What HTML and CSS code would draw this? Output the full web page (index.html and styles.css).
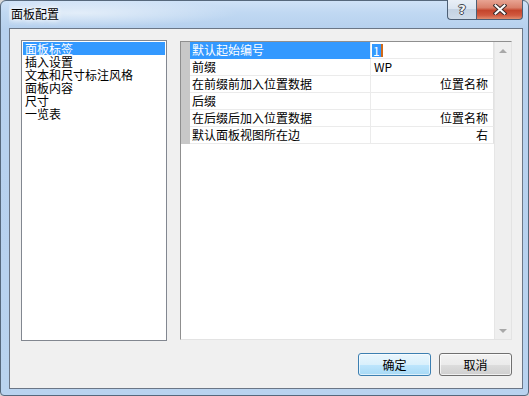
FILE: index.html
```html
<!DOCTYPE html>
<html>
<head>
<meta charset="utf-8">
<link rel="stylesheet" href="styles.css">
</head>
<body>
<div class="window">
  <div class="titlebar">
    <span class="title">面板配置</span>
    <div class="caption-btns">
      <div class="cap-btn help"><span class="qmark">?</span></div>
      <div class="cap-btn close">
        <svg width="14" height="11" viewBox="0 0 14 11">
          <path d="M2.5 1.5 L11.5 9.5 M11.5 1.5 L2.5 9.5" stroke="#3b2c2c" stroke-width="4" stroke-linecap="square"/>
          <path d="M2.5 1.5 L11.5 9.5 M11.5 1.5 L2.5 9.5" stroke="#ffffff" stroke-width="2" stroke-linecap="square"/>
        </svg>
      </div>
    </div>
  </div>
  <div class="client">
    <div class="panes">
      <ul class="list">
        <li class="item selected">面板标签</li>
        <li class="item">插入设置</li>
        <li class="item">文本和尺寸标注风格</li>
        <li class="item">面板内容</li>
        <li class="item">尺寸</li>
        <li class="item">一览表</li>
      </ul>
      <div class="grid">
        <div class="table">
          <div class="row">
            <div class="rh"></div>
            <div class="name sel">默认起始编号</div>
            <div class="val"><span class="edit-sel">1</span><span class="caret"></span></div>
          </div>
          <div class="row">
            <div class="rh"></div>
            <div class="name">前缀</div>
            <div class="val">WP</div>
          </div>
          <div class="row">
            <div class="rh"></div>
            <div class="name">在前缀前加入位置数据</div>
            <div class="val right">位置名称</div>
          </div>
          <div class="row">
            <div class="rh"></div>
            <div class="name">后缀</div>
            <div class="val"></div>
          </div>
          <div class="row">
            <div class="rh"></div>
            <div class="name">在后缀后加入位置数据</div>
            <div class="val right">位置名称</div>
          </div>
          <div class="row">
            <div class="rh"></div>
            <div class="name">默认面板视图所在边</div>
            <div class="val right">右</div>
          </div>
        </div>
        <div class="scrollbar">
          <span class="arrow up"></span>
          <span class="arrow down"></span>
        </div>
      </div>
    </div>
    <div class="buttons">
      <button class="btn default">确定</button>
      <button class="btn">取消</button>
    </div>
  </div>
</div>
</body>
</html>
```
FILE: styles.css
```css
* { box-sizing: border-box; }
html, body { margin: 0; padding: 0; background: #d8d8d8; }
body { width: 529px; height: 396px; overflow: hidden; font-family: "Noto Sans CJK SC", "Liberation Sans", sans-serif; font-size: 12px; }

.window {
  width: 529px;
  height: 396px;
  display: flex;
  flex-direction: column;
  background: linear-gradient(to bottom, #cfe2f7 0px, #c0d8f2 12px, #b6d0ee 28px, #b9d3ef 100%);
  border: 1px solid #56687c;
  border-radius: 6px 6px 4px 4px;
  padding: 0 5px 6px 8px;
}

.titlebar {
  height: 27px;
  display: flex;
  align-items: flex-start;
  background: radial-gradient(ellipse 160px 14px at 70px 12px, rgba(255,255,255,0.55), rgba(255,255,255,0) 100%);
}
.title {
  margin-top: 6px;
  margin-left: 2px;
  line-height: 14px;
  font-size: 12px;
  color: #000;
  text-shadow: 0 0 4px #fff, 0 0 6px #fff;
}
.caption-btns {
  margin-left: auto;
  display: flex;
  margin-top: -1px;
}
.cap-btn {
  height: 20px;
  border: 1px solid #4d5f75;
  border-top: none;
  display: flex;
  align-items: center;
  justify-content: center;
}
.help {
  width: 29px;
  border-right: none;
  border-radius: 0 0 0 4px;
  background: linear-gradient(to bottom, #e9eff7 0%, #dbe5f1 45%, #c4d2e3 50%, #cfdbe9 100%);
}
.qmark {
  font-family: "DejaVu Sans", sans-serif;
  font-weight: bold;
  font-size: 13px;
  line-height: 14px;
  color: #f4f4f4;
  text-shadow: -1px 0 #3d4550, 1px 0 #3d4550, 0 -1px #3d4550, 0 1px #3d4550;
}
.close {
  width: 47px;
  border-radius: 0 0 4px 0;
  background: linear-gradient(to bottom, #e8a493 0%, #d9806b 40%, #c4452c 55%, #d0583e 80%, #e08c6e 100%);
}

.client {
  flex: 1;
  background: #f0f0f0;
  border: 1px solid #6b7686;
  display: flex;
  flex-direction: column;
  padding: 11px 10px 12px 11px;
}

.panes {
  display: flex;
  align-items: flex-start;
  gap: 13px;
}

.list {
  list-style: none;
  margin: 0;
  width: 147px;
  height: 301px;
  padding: 1px;
  background: #fff;
  border: 1px solid #828790;
}
.item {
  height: 13px;
  line-height: 13px;
  padding-left: 2px;
  white-space: nowrap;
  color: #000;
}
.item.selected { background: #3399ff; color: #fff; }

.grid {
  margin-top: 1px;
  width: 332px;
  height: 299px;
  background: #fff;
  border-top: 1px solid #8f8f8f;
  border-left: 1px solid #8f8f8f;
  border-right: 1px solid #e3e3e3;
  border-bottom: 1px solid #e3e3e3;
  display: flex;
}
.table {
  flex: 1;
  display: flex;
  flex-direction: column;
}
.row {
  display: flex;
  height: 17px;
}
.rh {
  width: 9px;
  background: #c8c8c8;
}
.name, .val {
  height: 17px;
  line-height: 16px;
  border-bottom: 1px solid #ebebeb;
  white-space: nowrap;
}
.name {
  width: 181px;
  padding-left: 2px;
  border-right: 1px solid #ebebeb;
  color: #000;
}
.name.sel { background: #3399ff; color: #fff; border-bottom-color: #3399ff; }
.val {
  width: 123px;
  padding: 0 5px 0 3px;
  border-right: 1px solid #e2e2e2;
  color: #000;
  display: flex;
  align-items: center;
}
.val.right { justify-content: flex-end; }
.edit-sel {
  margin-left: -2px;
  background: #3399ff;
  color: #fff;
  line-height: 13px;
  padding: 0 1px;
}
.caret {
  width: 2px;
  height: 13px;
  background: #d06a1a;
  margin-left: 0;
}

.scrollbar {
  width: 17px;
  background: #efefef;
  border-left: 1px solid #e6e6e6;
  display: flex;
  flex-direction: column;
  justify-content: space-between;
  align-items: center;
  padding: 7px 0 6px;
}
.arrow {
  width: 0;
  height: 0;
  border-left: 4px solid transparent;
  border-right: 4px solid transparent;
}
.arrow.up { border-bottom: 4px solid #a8a8a8; }
.arrow.down { border-top: 4px solid #a8a8a8; }

.buttons {
  margin-top: 12px;
  display: flex;
  justify-content: flex-end;
  gap: 8px;
}
.btn {
  width: 73px;
  height: 23px;
  padding: 0;
  font-family: "Noto Sans CJK SC", "Liberation Sans", sans-serif;
  font-size: 12px;
  color: #000;
  border: 1px solid #707070;
  border-radius: 3px;
  background: linear-gradient(to bottom, #f2f2f2 0%, #ebebeb 50%, #dddddd 51%, #cfcfcf 100%);
  box-shadow: inset 0 0 0 1px rgba(255,255,255,0.7);
}
.btn.default {
  border-color: #3c7fb1;
  background: linear-gradient(to bottom, #eaf6fd 0%, #d9f0fc 50%, #bee6fd 51%, #a7d9f5 100%);
  box-shadow: inset 0 0 0 1px rgba(255,255,255,0.6), 0 0 0 0 transparent;
}
```
